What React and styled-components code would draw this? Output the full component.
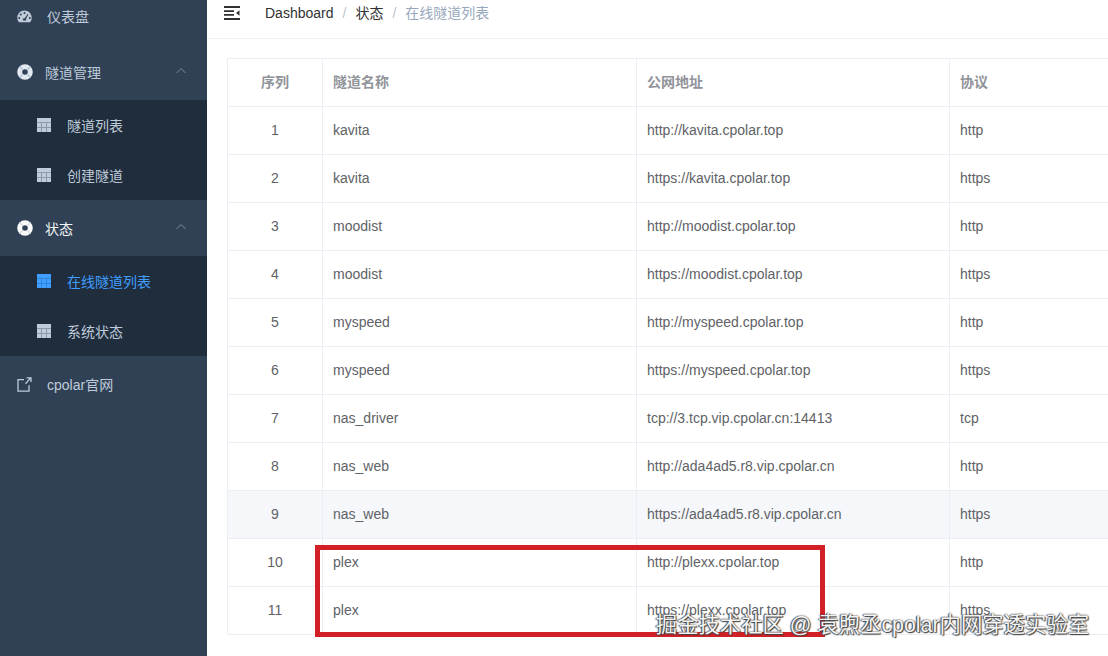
import React from "react";
import styled, { createGlobalStyle } from "styled-components";

const tunnels = [
  ["kavita", "http://kavita.cpolar.top", "http"],
  ["kavita", "https://kavita.cpolar.top", "https"],
  ["moodist", "http://moodist.cpolar.top", "http"],
  ["moodist", "https://moodist.cpolar.top", "https"],
  ["myspeed", "http://myspeed.cpolar.top", "http"],
  ["myspeed", "https://myspeed.cpolar.top", "https"],
  ["nas_driver", "tcp://3.tcp.vip.cpolar.cn:14413", "tcp"],
  ["nas_web", "http://ada4ad5.r8.vip.cpolar.cn", "http"],
  ["nas_web", "https://ada4ad5.r8.vip.cpolar.cn", "https"],
  ["plex", "http://plexx.cpolar.top", "http"],
  ["plex", "https://plexx.cpolar.top", "https"],
];

const FONT = `"Liberation Sans", "Noto Sans CJK SC", sans-serif`;

const GlobalStyle = createGlobalStyle`
  html, body {
    margin: 0;
    height: 656px;
    overflow: hidden;
    background: #fff;
    font-family: ${FONT};
  }
`;

const Page = styled.div`
  position: relative;
  display: flex;
  width: 1108px;
  height: 656px;
  overflow: hidden;
`;

const Sidebar = styled.nav`
  flex: 0 0 207px;
  background: #304156;
  font-size: 14px;
`;

/* page is scrolled a little in the shot */
const Scrolled = styled.div`
  margin-top: -12px;
`;

const MenuRow = styled.div`
  display: flex;
  align-items: center;
  height: 56px;
  padding-left: 17px;
  color: ${(p) => (p.$open ? "#f4f4f5" : "#bfcbd9")};
`;

const MenuLabel = styled.span`
  margin-left: ${(p) => p.$gap}px;
  flex: 1;
`;

const Chevron = styled.svg`
  width: 12px;
  height: 12px;
  margin-right: 20px;
  margin-top: -3px;
  fill: none;
  stroke: #7f8da0;
  stroke-width: 1;
`;

const SubMenu = styled.div`
  background: #1f2d3d;
`;

const SubRow = styled.div`
  display: flex;
  align-items: center;
  height: 50px;
  padding-left: 37px;
  color: ${(p) => (p.$active ? "#409eff" : "#bfcbd9")};
`;

const SubLabel = styled.span`
  margin-left: 16px;
`;

const Main = styled.main`
  flex: 1;
  min-width: 0;
  overflow: hidden;
`;

const Header = styled.header`
  display: flex;
  align-items: center;
  height: 26px;
  padding: 0 0 12px 17px;
  border-bottom: 1px solid #f0f1f3;
  font-size: 14px;
  line-height: 20px;
`;

const Crumbs = styled.div`
  display: flex;
  align-items: center;
  height: 20px;
  margin-left: 25px;
`;

const Crumb = styled.span`
  display: block;
  height: 20px;
  color: ${(p) => (p.$last ? "#97a8be" : "#303133")};
`;

const Sep = styled.span`
  display: block;
  height: 20px;
  margin: 0 9px;
  color: #c0c4cc;
`;

const Content = styled.div`
  padding: 19px 0 0 20px;
`;

const Table = styled.table`
  width: 1000px;
  table-layout: fixed;
  border-collapse: collapse;
  font-size: 14px;
  color: #606266;
`;

const Th = styled.th`
  height: 43px;
  padding: 0 10px 4px;
  border: 1px solid #ebeef5;
  text-align: ${(p) => (p.$center ? "center" : "left")};
  color: #909399;
  font-weight: 700;
  font-size: 14px;
`;

const Td = styled.td`
  height: 45px;
  padding: 0 10px 2px;
  border: 1px solid #ebeef5;
  text-align: ${(p) => (p.$center ? "center" : "left")};
  background: ${(p) => (p.$hover ? "#f5f7fa" : "#fff")};
`;

const Highlight = styled.div`
  position: absolute;
  left: 315px;
  top: 545px;
  width: 500px;
  height: 82px;
  border: 5px solid #d32027;
  pointer-events: none;
`;

const Watermark = styled.div`
  position: absolute;
  right: 19px;
  top: 612px;
  font-size: 21.35px;
  line-height: 26px;
  color: #f4f4f4;
  text-shadow: 0 0 2px #333, 1px 1px 1px #444, -1px 0 1px #555;
  white-space: nowrap;
`;

const DashIcon = () => (
  <svg width="15" height="13" viewBox="0 0 15 13">
    <path
      fill="#bfcbd9"
      fillRule="evenodd"
      d="M7.5 0.5C3.4 0.5 0.3 3.7 0.3 7.7c0 1.5.4 2.9 1.2 4.1.2.3.5.4.8.4h10.4c.3 0 .6-.1.8-.4.8-1.2 1.2-2.6 1.2-4.1C14.7 3.7 11.6.5 7.5.5zM7.5 2a1 1 0 1 1 0 2 1 1 0 0 1 0-2zM3.7 3.6a1 1 0 1 1 0 2 1 1 0 0 1 0-2zM2.2 7a1 1 0 1 1 0 2 1 1 0 0 1 0-2zM12.8 7a1 1 0 1 1 0 2 1 1 0 0 1 0-2zM10.6 3.9l.8.4-2.4 4.6c.4.5.4 1.3-.1 1.7H6.2c-.6-.6-.5-1.6.2-2.1.4-.3.9-.4 1.4-.2l2.8-4.4z"
    />
  </svg>
);

const RingIcon = ({ bright }) => (
  <svg width="16" height="16" viewBox="0 0 16 16">
    <circle cx="8" cy="8" r="5.3" fill="none" stroke={bright ? "#fbfbfa" : "#e3e9f0"} strokeWidth="5" />
    <path
      d="M2.6 2.6l3 3M13.4 2.6l-3 3M2.6 13.4l3-3M13.4 13.4l-3-3"
      stroke={bright ? "#d4dce4" : "#b4c4d6"}
      strokeWidth="1.4"
      fill="none"
    />
  </svg>
);

const GridIcon = ({ color, line }) => (
  <svg width="14" height="14" viewBox="0 0 14 14">
    <rect x="0" y="0" width="14" height="14" fill={color} />
    <path d="M0 4.5h14M0 9.5h14M4.5 4.5V14M9.5 4.5V14" stroke={line} strokeWidth="1" fill="none" />
  </svg>
);

const LinkIcon = () => (
  <svg width="15" height="15" viewBox="0 0 15 15" fill="none" stroke="#bfcbd9" strokeWidth="1.3">
    <path d="M7 2.6H1v11.6h11V8.2M8.5 6.7L13.8.9M9.6.8h4.4v4.2" />
  </svg>
);

const FoldIcon = () => (
  <svg width="16" height="14" viewBox="0 0 16 14">
    <path d="M0 1h16M0 13h16M0 5.2h10M0 8.8h10" stroke="#303133" strokeWidth="1.8" fill="none" />
    <path d="M15.5 4.2v5.6L12 7z" fill="#303133" />
  </svg>
);

const UpArrow = () => (
  <Chevron viewBox="0 0 12 12">
    <path d="M1.5 8L6 3.5 10.5 8" />
  </Chevron>
);

const MENU_GRID = "#8c99a9";
const ACTIVE_GRID = "#2f86dc";

export default function App() {
  return (
    <Page>
      <GlobalStyle />
      <Sidebar>
        <Scrolled>
          <MenuRow>
            <DashIcon />
            <MenuLabel $gap={15}>仪表盘</MenuLabel>
          </MenuRow>
          <MenuRow>
            <RingIcon />
            <MenuLabel $gap={12}>隧道管理</MenuLabel>
            <UpArrow />
          </MenuRow>
          <SubMenu>
            <SubRow>
              <GridIcon color="#bfcbd9" line={MENU_GRID} />
              <SubLabel>隧道列表</SubLabel>
            </SubRow>
            <SubRow>
              <GridIcon color="#bfcbd9" line={MENU_GRID} />
              <SubLabel>创建隧道</SubLabel>
            </SubRow>
          </SubMenu>
          <MenuRow $open>
            <RingIcon bright />
            <MenuLabel $gap={12}>状态</MenuLabel>
            <UpArrow />
          </MenuRow>
          <SubMenu>
            <SubRow $active>
              <GridIcon color="#409eff" line={ACTIVE_GRID} />
              <SubLabel>在线隧道列表</SubLabel>
            </SubRow>
            <SubRow>
              <GridIcon color="#bfcbd9" line={MENU_GRID} />
              <SubLabel>系统状态</SubLabel>
            </SubRow>
          </SubMenu>
          <MenuRow>
            <LinkIcon />
            <MenuLabel $gap={15}>cpolar官网</MenuLabel>
          </MenuRow>
        </Scrolled>
      </Sidebar>
      <Main>
        <Header>
          <FoldIcon />
          <Crumbs>
            <Crumb>Dashboard</Crumb>
            <Sep>/</Sep>
            <Crumb>状态</Crumb>
            <Sep>/</Sep>
            <Crumb $last>在线隧道列表</Crumb>
          </Crumbs>
        </Header>
        <Content>
          <Table>
            <colgroup>
              <col width="95" />
              <col width="314" />
              <col width="313" />
              <col width="278" />
            </colgroup>
            <thead>
              <tr>
                <Th $center>序列</Th>
                <Th>隧道名称</Th>
                <Th>公网地址</Th>
                <Th>协议</Th>
              </tr>
            </thead>
            <tbody>
              {tunnels.map((t, i) => (
                <tr key={i}>
                  <Td $center $hover={i === 8}>{i + 1}</Td>
                  <Td $hover={i === 8}>{t[0]}</Td>
                  <Td $hover={i === 8}>{t[1]}</Td>
                  <Td $hover={i === 8}>{t[2]}</Td>
                </tr>
              ))}
            </tbody>
          </Table>
        </Content>
      </Main>
      <Highlight />
      <Watermark>掘金技术社区 @ 袁煦丞cpolar内网穿透实验室</Watermark>
    </Page>
  );
}
